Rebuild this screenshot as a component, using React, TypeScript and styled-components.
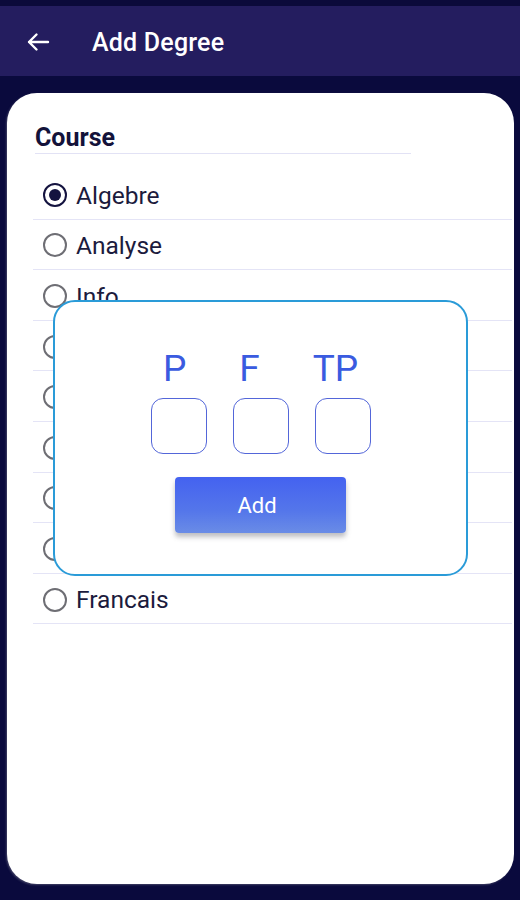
import React from "react";
import styled, { createGlobalStyle } from "styled-components";

const GlobalStyle = createGlobalStyle`
  html, body {
    margin: 0;
    padding: 0;
    background: #0a0a3d;
  }
  * {
    box-sizing: border-box;
  }
`;

/* Styles */
const Screen = styled.div`
  display: flex;
  flex-direction: column;
  min-height: 900px;
  width: 520px;
  background-color: #0a0a3d;
  font-family: Roboto, "Liberation Sans", sans-serif;
`;

const StatusStrip = styled.div`
  height: 6px;
  background-color: #0b0a3a;
`;

const Header = styled.header`
  display: flex;
  align-items: center;
  height: 70px;
  padding: 2px 0 0 25px;
  background-color: #241d5f;
`;

const BackButton = styled.button`
  display: flex;
  align-items: center;
  justify-content: center;
  width: 26px;
  height: 26px;
  padding: 0;
  border: none;
  background: none;
  cursor: pointer;
`;

const Title = styled.h1`
  margin: 0 0 0 41px;
  color: #ffffff;
  font-size: 25px;
  font-weight: 500;
  line-height: 1;
  letter-spacing: 0.2px;
`;

const Card = styled.main`
  position: relative;
  height: 791px;
  margin: 17px 6px 16px 7px;
  padding: 32px 2px 0 26px;
  background-color: #ffffff;
  border-radius: 30px;
  box-shadow: -1px 1px 2px rgba(120, 120, 140, 0.5);
`;

const SectionTitle = styled.h2`
  width: 376px;
  margin: 0 0 15px 2px;
  padding-bottom: 2px;
  color: #13123a;
  font-size: 25px;
  font-weight: 700;
  line-height: 26px;
  border-bottom: 1px solid #e2e2f5;
`;

const CourseList = styled.ul`
  margin: 0;
  padding: 0;
  list-style: none;
`;

const CourseRow = styled.li`
  display: flex;
  align-items: center;
  height: 50.6px;
  padding: 2px 0 0 10px;
  border-bottom: 1px solid #e4e4f6;
`;

const Radio = styled.span<{ $checked?: boolean }>`
  display: flex;
  align-items: center;
  justify-content: center;
  width: 24px;
  height: 24px;
  border-radius: 50%;
  border: ${({ $checked }) => ($checked ? "2.5px solid #14133f" : "2px solid #6e6e74")};

  &::after {
    content: "";
    display: ${({ $checked }) => ($checked ? "block" : "none")};
    width: 12px;
    height: 12px;
    border-radius: 50%;
    background-color: #14133f;
  }
`;

const CourseName = styled.span`
  margin: 2px 0 0 9px;
  color: #1c1b3d;
  font-size: 24.5px;
  line-height: 1;
`;

const Dialog = styled.div`
  position: absolute;
  left: 46px;
  top: 207px;
  width: 415px;
  height: 276px;
  display: flex;
  flex-direction: column;
  align-items: center;
  padding-top: 48px;
  background-color: #ffffff;
  border: 2px solid #2a9bd8;
  border-radius: 22px;
`;

const LabelRow = styled.div`
  display: flex;
  gap: 53px;
`;

const FieldLabel = styled.span`
  color: #3a5be0;
  font-size: 37px;
  line-height: 37px;
`;

const InputRow = styled.div`
  display: flex;
  gap: 26px;
  margin-top: 11px;
`;

const GradeInput = styled.input`
  width: 56px;
  height: 56px;
  padding: 0;
  border: 1.5px solid #5366d9;
  border-radius: 12px;
  background: #ffffff;
  text-align: center;
  font-size: 22px;
  font-family: Roboto, "Liberation Sans", sans-serif;
  outline: none;
`;

const AddButton = styled.button`
  width: 171px;
  height: 56px;
  margin-top: 23px;
  padding: 0 7px 0 0;
  border: none;
  border-radius: 4px;
  background: linear-gradient(180deg, #4462f0 0%, #5476ea 60%, #6a8ce6 100%);
  box-shadow: 0 4px 5px rgba(70, 70, 80, 0.35);
  color: #ffffff;
  font-family: Roboto, "Liberation Sans", sans-serif;
  font-size: 22px;
  cursor: pointer;
`;

/* Data: rows under the dialog show only their radio */
const courses = ["Algebre", "Analyse", "Info", "", "", "", "", "", "Francais"];

const BackArrow = () => (
  <svg width="24" height="20" viewBox="0 0 24 20" fill="none">
    <path
      d="M22 10H3M10.5 2.5L3 10l7.5 7.5"
      stroke="#ffffff"
      strokeWidth="2.4"
      strokeLinecap="round"
      strokeLinejoin="round"
    />
  </svg>
);

/* Main Component */
export default function App() {
  const selected = "Algebre";

  return (
    <Screen>
      <GlobalStyle />
      <StatusStrip />
      <Header>
        <BackButton aria-label="Back">
          <BackArrow />
        </BackButton>
        <Title>Add Degree</Title>
      </Header>
      <Card>
        <SectionTitle>Course</SectionTitle>
        <CourseList>
          {courses.map((c, i) => (
            <CourseRow key={i}>
              <Radio $checked={c === selected} />
              {c && <CourseName>{c}</CourseName>}
            </CourseRow>
          ))}
        </CourseList>
        <Dialog>
          <LabelRow>
            <FieldLabel>P</FieldLabel>
            <FieldLabel>F</FieldLabel>
            <FieldLabel>TP</FieldLabel>
          </LabelRow>
          <InputRow>
            <GradeInput aria-label="P" />
            <GradeInput aria-label="F" />
            <GradeInput aria-label="TP" />
          </InputRow>
          <AddButton>Add</AddButton>
        </Dialog>
      </Card>
    </Screen>
  );
}
